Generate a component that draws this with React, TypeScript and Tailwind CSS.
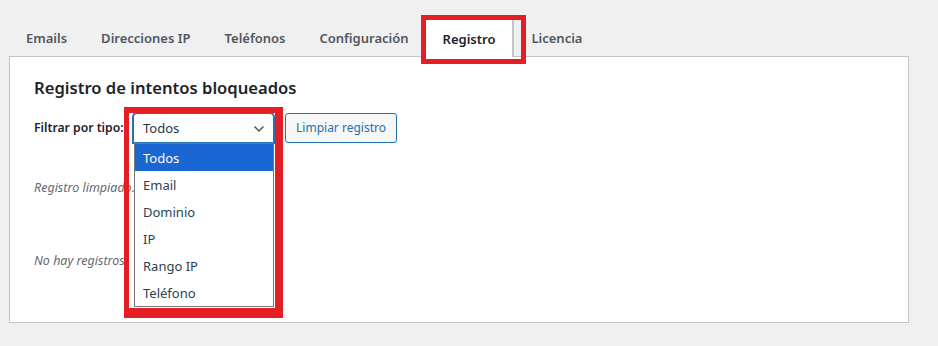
import React from "react";

const tabs = ["Emails", "Direcciones IP", "Teléfonos", "Configuración", "Registro", "Licencia"];
const options = ["Todos", "Email", "Dominio", "IP", "Rango IP", "Teléfono"];

export default function App() {
  return (
    <div className="relative w-[938px] h-[346px] overflow-hidden bg-[#f0f0f1] pl-[9px] pt-[20px] font-['Noto_Sans',sans-serif] text-[#1d2327]">
      <nav className="flex h-[36px] items-stretch">
        {tabs.map((t) => {
          const active = t === "Registro";
          return (
            <div
              key={t}
              className={
                active
                  ? "relative z-10 flex h-[37px] items-center bg-white px-[17px] pt-[2px] border-r-2 border-[#c3c4c7] text-[13px] font-semibold text-[#1d2327]"
                  : "flex items-center px-[17px] pt-[2px] text-[13px] font-semibold text-[#50575e]"
              }
            >
              {t}
            </div>
          );
        })}
      </nav>
      <div className="relative w-[900px] h-[267px] border border-[#c3c4c7] bg-white px-[24px] pt-[19px]">
        <h2 className="h-[24px] text-[16.6px] leading-[24px] font-semibold text-[#1d2327]">
          Registro de intentos bloqueados
        </h2>
        <div className="mt-[13px] flex items-center">
          <label className="w-[99px] text-[12.2px] font-semibold text-[#1d2327]">Filtrar por tipo:</label>
          <div className="relative">
            <div className="flex h-[30px] w-[141px] items-center justify-between rounded-t-[4px] border border-[#2271b1] shadow-[0_0_0_1px_#2271b1] bg-white pl-[9px] pr-[8px] pt-[1px] text-[13px] text-[#2c3338]">
              <span>Todos</span>
              <svg width="12" height="8" viewBox="0 0 12 8" fill="none">
                <path d="M1.5 1.5 L6 6 L10.5 1.5" stroke="#50575e" strokeWidth="1.5" />
              </svg>
            </div>
            <ul className="absolute left-[1px] top-[30px] z-20 w-[140px] border border-[#767676] bg-white text-[13px] text-[#2a3f55]">
              {options.map((o, i) => (
                <li
                  key={o}
                  className={
                    i === 0
                      ? "h-[27px] leading-[28px] pl-[8px] bg-[#1a66d2] text-white"
                      : "h-[27px] leading-[29px] pl-[8px]"
                  }
                >
                  {o}
                </li>
              ))}
            </ul>
          </div>
          <button className="ml-[11px] h-[30px] w-[112px] rounded-[3px] border border-[#2271b1] bg-[#f6f7f7] text-[12px] text-[#2271b1]">
            Limpiar registro
          </button>
        </div>
        <p className="mt-[35px] text-[12.5px] leading-[20px] italic text-[#646970]">Registro limpiado.</p>
        <p className="mt-[53px] text-[12.5px] leading-[20px] italic text-[#646970]">No hay registros.</p>
      </div>
      <div className="pointer-events-none absolute left-[421px] top-[15px] z-30 h-[49px] w-[105px] border-[5px] border-[#e31e24]" />
      <div className="pointer-events-none absolute left-[124px] top-[107px] z-30 h-[211px] w-[159px] border-l-[5px] border-t-[6px] border-r-[8px] border-b-[10px] border-[#e31e24]" />
    </div>
  );
}
